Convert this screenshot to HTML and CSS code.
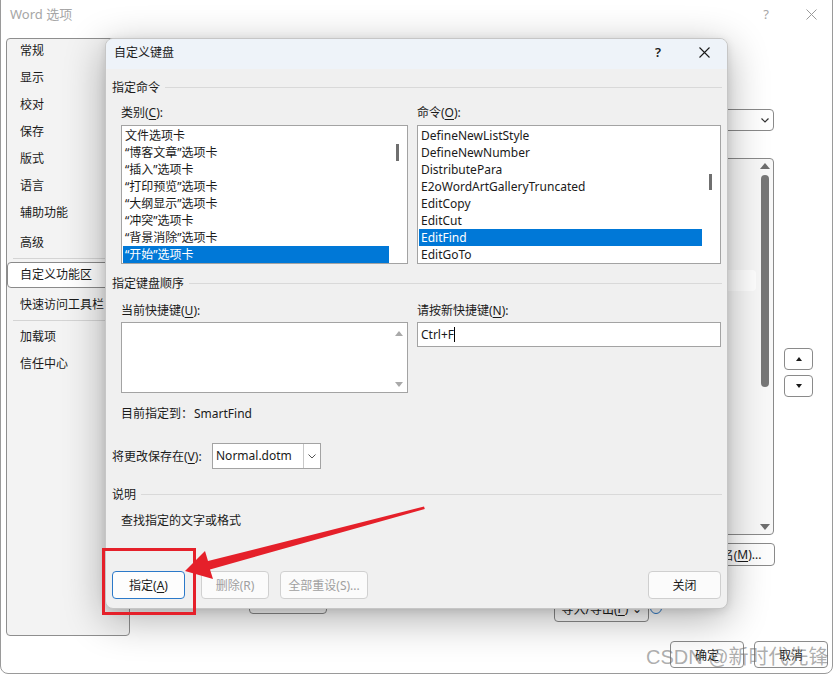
FILE: index.html
```html
<!DOCTYPE html>
<html lang="zh-CN">
<head>
<meta charset="utf-8">
<title>Word 选项</title>
<link rel="stylesheet" href="styles.css">
</head>
<body>
<div class="window">
  <div class="win-title">
    <span class="win-name">Word 选项</span>
    <span class="win-help">?</span>
    <svg class="win-close" width="11" height="11" viewBox="0 0 11 11"><path d="M0.5 0.5L10.5 10.5M10.5 0.5L0.5 10.5" stroke="#9a9a9a" stroke-width="1" fill="none"/></svg>
  </div>
  <div class="win-main">
    <nav class="nav">
      <div class="nav-item first">常规</div>
      <div class="nav-item">显示</div>
      <div class="nav-item">校对</div>
      <div class="nav-item">保存</div>
      <div class="nav-item">版式</div>
      <div class="nav-item">语言</div>
      <div class="nav-item">辅助功能</div>
      <div class="nav-item adv">高级</div>
      <div class="nav-sep"></div>
      <div class="nav-item selected">自定义功能区</div>
      <div class="nav-item after-sel">快速访问工具栏</div>
      <div class="nav-sep"></div>
      <div class="nav-item after-sep">加载项</div>
      <div class="nav-item">信任中心</div>
    </nav>
    <div class="pane">
      <div class="pane-combo">
        <svg class="chev" width="8" height="5" viewBox="0 0 8 5"><path d="M0.5 0.5L4 4L7.5 0.5" stroke="#333" stroke-width="1.2" fill="none"/></svg>
      </div>
      <div class="tree">
        <div class="tree-items"><div class="tree-row"></div></div>
        <div class="tree-scroll">
          <span class="tri-up dark"></span>
          <span class="tree-thumb"></span>
          <span class="tri-down dark"></span>
        </div>
      </div>
      <div class="updown">
        <button class="ud-btn"><span class="tri-up small"></span></button>
        <button class="ud-btn"><span class="tri-down small"></span></button>
      </div>
      <div class="rename-row"><button class="btn rename">重命名(<u>M</u>)...</button></div>
      <div class="custom-row">
        <button class="btn reset">重置(E)</button>
        <button class="btn impexp">导入/导出(<u>P</u>) ⌄</button>
        <span class="info"></span>
      </div>
    </div>
  </div>
  <div class="win-footer">
    <button class="btn foot">确定</button>
    <button class="btn foot">取消</button>
  </div>
</div>

<div class="dialog">
  <div class="dlg-title">
    <span class="dlg-name">自定义键盘</span>
    <span class="dlg-help">?</span>
    <svg class="dlg-close" width="11" height="11" viewBox="0 0 11 11"><path d="M0.5 0.5L10.5 10.5M10.5 0.5L0.5 10.5" stroke="#1a1a1a" stroke-width="1.1" fill="none"/></svg>
  </div>
  <div class="dlg-body">
    <div class="group first-group">指定命令</div>
    <div class="cols cols-top">
      <div class="lbl">类别(<u>C</u>):</div>
      <div class="lbl">命令(<u>O</u>):</div>
      <div class="listbox">
        <div class="items">
          <div class="item">文件选项卡</div>
          <div class="item">“博客文章”选项卡</div>
          <div class="item">“插入”选项卡</div>
          <div class="item">“打印预览”选项卡</div>
          <div class="item">“大纲显示”选项卡</div>
          <div class="item">“冲突”选项卡</div>
          <div class="item">“背景消除”选项卡</div>
          <div class="item sel">“开始”选项卡</div>
        </div>
        <div class="track"><span class="thumb thumb-left"></span></div>
      </div>
      <div class="listbox">
        <div class="items">
          <div class="item">DefineNewListStyle</div>
          <div class="item">DefineNewNumber</div>
          <div class="item">DistributePara</div>
          <div class="item">E2oWordArtGalleryTruncated</div>
          <div class="item">EditCopy</div>
          <div class="item">EditCut</div>
          <div class="item sel">EditFind</div>
          <div class="item">EditGoTo</div>
        </div>
        <div class="track"><span class="thumb thumb-right"></span></div>
      </div>
    </div>
    <div class="group second-group">指定键盘顺序</div>
    <div class="cols cols-keys">
      <div class="lbl">当前快捷键(<u>U</u>):</div>
      <div class="lbl">请按新快捷键(<u>N</u>):</div>
      <div class="keybox">
        <div class="keyitems"></div>
        <div class="keytrack"><span class="tri-up light"></span><span class="tri-down light"></span></div>
      </div>
      <div class="keyinput">Ctrl+F<span class="caret"></span></div>
    </div>
    <div class="current">目前指定到：<span class="cur-val">SmartFind</span></div>
    <div class="save-row">
      <span class="save-lbl">将更改保存在(<u>V</u>):</span>
      <div class="dropdown">
        <span class="dd-text">Normal.dotm</span>
        <span class="dd-btn"><svg width="8" height="5" viewBox="0 0 8 5"><path d="M0.5 0.5L4 4L7.5 0.5" stroke="#555" stroke-width="1" fill="none"/></svg></span>
      </div>
    </div>
    <div class="group third-group">说明</div>
    <div class="desc">查找指定的文字或格式</div>
    <div class="dlg-buttons">
      <button class="btn dlg-btn primary">指定(<u>A</u>)</button>
      <button class="btn dlg-btn disabled del">删除(R)</button>
      <button class="btn dlg-btn disabled resetall">全部重设(S)...</button>
      <button class="btn dlg-btn close">关闭</button>
    </div>
  </div>
</div>

<svg class="annot" width="834" height="676" viewBox="0 0 834 676">
  <rect x="103.5" y="549.5" width="91" height="64" fill="none" stroke="#e5202a" stroke-width="3"/>
  <polygon points="185,571 205,551 208,561 424,506.5 424.8,509 210,569.5 213,579" fill="#e5202a"/>
</svg>

<div class="watermark">CSDN @新时代先锋</div>
</body>
</html>
```

FILE: styles.css
```css
* { box-sizing: border-box; }
html, body { margin: 0; padding: 0; }
body {
  width: 834px;
  height: 676px;
  position: relative;
  overflow: hidden;
  background: #ffffff;
  font-family: "Noto Sans", "Noto Sans CJK SC", sans-serif;
  font-size: 12px;
  color: #1a1a1a;
}
u { text-decoration: underline; text-underline-offset: 2px; }

button {
  font-family: inherit;
  font-size: 12px;
  color: #1a1a1a;
  padding: 0;
  margin: 0;
}

/* ---------- background window ---------- */
.window {
  width: 833px;
  height: 682px;
  margin-top: -8px;
  padding-top: 7px;
  border: 1px solid #9a9a9a;
  border-radius: 8px;
  background: #ffffff;
  display: flex;
  flex-direction: column;
}
.win-title {
  height: 38px;
  flex: none;
  display: flex;
  align-items: flex-start;
  padding: 4px 0 0 9px;
  color: #a6a6a6;
  font-size: 13px;
  line-height: 20px;
}
.win-name { flex: 1; }
.win-help { width: 10px; text-align: center; margin-right: 35px; }
.win-close { margin: 5px 15px 0 0; }

.win-main {
  height: 598px;
  flex: none;
  display: flex;
  padding-left: 5px;
}
.nav {
  width: 124px;
  height: 598px;
  border: 1px solid #8e8e8e;
  border-radius: 4px;
  background: #f3f3f3;
  flex: none;
}
.nav-item {
  height: 27px;
  line-height: 27px;
  padding-left: 13px;
  white-space: nowrap;
}
.nav-item.first { margin-top: -2px; }
.nav-item.adv { margin-top: 3px; }
.nav-item.selected {
  margin-top: 3px;
  height: 26px;
  line-height: 24px;
  width: 118px;
  padding-left: 12px;
  background: #ffffff;
  border: 1px solid #8a8a8a;
  border-radius: 4px;
}
.nav-item.after-sel { margin-top: 3px; }
.nav-item.after-sep { margin-top: 2px; }
.nav-sep {
  height: 1px;
  background: #d4d4d4;
  margin: 2px 0 0 6px;
  width: 104px;
}

.pane {
  flex: 1;
  display: grid;
  grid-template-columns: 1fr 29px;
  column-gap: 10px;
  align-content: start;
  padding: 71px 19px 0 0;
}
.pane-combo {
  grid-column: 1;
  grid-row: 1;
  justify-self: end;
  width: 250px;
  height: 22px;
  border: 1px solid #8a8a8a;
  border-radius: 4px;
  background: #ffffff;
  display: flex;
  align-items: center;
  justify-content: flex-end;
  padding-right: 4px;
}
.tree {
  grid-column: 1;
  grid-row: 2;
  justify-self: end;
  margin-top: 27px;
  width: 340px;
  height: 377px;
  border: 1px solid #8a8a8a;
  border-radius: 4px;
  background: #f8f8f8;
  display: flex;
}
.tree-items { flex: 1; padding-top: 111px; }
.tree-row {
  height: 21px;
  margin-right: 4px;
  background: #ffffff;
  border-radius: 4px;
}
.tree-scroll {
  width: 10px;
  margin-right: 3px;
  display: flex;
  flex-direction: column;
  align-items: center;
  padding: 4px 0 4px;
}
.tree-thumb {
  display: block;
  width: 8px;
  height: 212px;
  margin-top: 6px;
  background: #777777;
  border-radius: 4px;
}
.tree-scroll .tri-down { margin-top: auto; }

.tri-up, .tri-down {
  display: block;
  width: 0;
  height: 0;
  border-left: 4px solid transparent;
  border-right: 4px solid transparent;
}
.tri-up { border-bottom: 5px solid #666; }
.tri-down { border-top: 5px solid #666; }
.tri-up.dark { border-bottom-color: #6e6e6e; border-left-width: 5px; border-right-width: 5px; border-bottom-width: 6px; }
.tri-down.dark { border-top-color: #6e6e6e; border-left-width: 5px; border-right-width: 5px; border-top-width: 6px; }
.tri-up.small { border-bottom: 4px solid #1a1a1a; border-left-width: 3.5px; border-right-width: 3.5px; }
.tri-down.small { border-top: 4px solid #1a1a1a; border-left-width: 3.5px; border-right-width: 3.5px; }
.tri-up.light { border-bottom-color: #a9a9a9; }
.tri-down.light { border-top-color: #a9a9a9; }

.updown {
  grid-column: 2;
  grid-row: 2;
  margin-top: 217px;
  display: flex;
  flex-direction: column;
  gap: 5px;
}
.ud-btn {
  width: 29px;
  height: 22px;
  border: 1px solid #8a8a8a;
  border-radius: 4px;
  background: #ffffff;
  display: flex;
  align-items: center;
  justify-content: center;
}

.btn {
  border: 1px solid #8a8a8a;
  border-radius: 4px;
  background: #fdfdfd;
  display: flex;
  align-items: center;
  justify-content: center;
  white-space: nowrap;
}
.rename-row {
  grid-column: 1;
  grid-row: 3;
  justify-self: end;
  margin: 8px -1px 0 0;
}
.rename { width: 91px; height: 23px; }
.custom-row {
  grid-column: 1;
  grid-row: 4;
  margin-top: 29px;
  display: flex;
  align-items: flex-start;
}
.reset { width: 78px; height: 26px; margin: -7px 0 0 119px; }
.impexp { width: 95px; height: 27px; margin-left: 227px; }
.info {
  width: 12px;
  height: 12px;
  border: 1.5px solid #2a78c8;
  border-radius: 50%;
  margin: 7px 0 0 1px;
}

.win-footer {
  margin-top: 5px;
  display: flex;
  justify-content: flex-end;
  gap: 10px;
  padding-right: 4px;
}
.foot { width: 74px; height: 27px; }

/* ---------- dialog ---------- */
.dialog {
  position: absolute;
  left: 105px;
  top: 38px;
  width: 623px;
  height: 571px;
  border: 1px solid #c6c6c6;
  border-radius: 8px;
  background: #f0f0f0;
  overflow: hidden;
  display: flex;
  flex-direction: column;
  box-shadow: 0 10px 40px rgba(0, 0, 0, 0.32), 0 2px 8px rgba(0, 0, 0, 0.10);
}
.dlg-title {
  height: 30px;
  flex: none;
  background: #eef3f9;
  display: flex;
  align-items: flex-start;
  padding: 5px 0 0 8px;
  line-height: 17px;
}
.dlg-name { flex: 1; }
.dlg-help { width: 10px; text-align: center; margin-right: 36px; font-size: 13px; font-weight: 600; }
.dlg-close { margin: 3px 17px 0 0; }

.dlg-body {
  flex: 1;
  display: flex;
  flex-direction: column;
  padding: 0 5px 9px 6px;
}
.group {
  display: flex;
  align-items: center;
  line-height: 17px;
  height: 17px;
  white-space: nowrap;
}
.group::after {
  content: "";
  flex: 1;
  height: 1px;
  background: #d9d9d9;
  margin-left: 5px;
}
.first-group { margin-top: 10px; }
.second-group { margin-top: 11px; }
.third-group { margin-top: 17px; }

.cols {
  display: grid;
  grid-template-columns: 287px 304px;
  column-gap: 9px;
  margin-left: 9px;
}
.cols-top { margin-top: 8px; }
.cols-keys { margin-top: 10px; }
.lbl { line-height: 17px; height: 17px; white-space: nowrap; }

.listbox {
  margin-top: 4px;
  height: 139px;
  border: 1px solid #a3a3a3;
  background: #ffffff;
  padding: 1px;
  display: flex;
  overflow: hidden;
}
.items { flex: 1; }
.item {
  height: 17px;
  line-height: 17px;
  padding-left: 2px;
  white-space: nowrap;
}
.item.sel { background: #0078d7; color: #ffffff; }
.track { width: 17px; position: relative; }
.thumb {
  position: absolute;
  left: 7px;
  width: 3px;
  background: #6f6f6f;
}
.thumb-left { top: 17px; height: 17px; }
.thumb-right { top: 47px; height: 16px; }

.keybox {
  margin-top: 3px;
  height: 71px;
  border: 1px solid #a3a3a3;
  background: #ffffff;
  display: flex;
}
.keyitems { flex: 1; }
.keytrack {
  width: 17px;
  display: flex;
  flex-direction: column;
  align-items: center;
  justify-content: space-between;
  padding: 8px 0 5px;
}
.keyinput {
  margin-top: 3px;
  height: 25px;
  border: 1px solid #a3a3a3;
  background: #ffffff;
  display: flex;
  align-items: center;
  padding-left: 3px;
}
.caret {
  display: inline-block;
  width: 1px;
  height: 15px;
  background: #000;
  margin-left: 0;
}

.current {
  margin-top: 12px;
  padding-left: 9px;
  line-height: 17px;
  height: 17px;
}
.cur-val { margin-left: 1px; }

.save-row {
  margin-top: 21px;
  display: flex;
  align-items: center;
  height: 26px;
}
.save-lbl { width: 100px; white-space: nowrap; }
.dropdown {
  width: 109px;
  height: 26px;
  border: 1px solid #a3a3a3;
  background: #ffffff;
  display: flex;
  align-items: stretch;
}
.dd-text { flex: 1; padding-left: 3px; line-height: 24px; }
.dd-btn {
  width: 17px;
  border-left: 1px solid #c8c8c8;
  display: flex;
  align-items: center;
  justify-content: center;
}

.desc {
  margin-top: 9px;
  padding-left: 9px;
  line-height: 17px;
  height: 17px;
}

.dlg-buttons {
  margin-top: auto;
  display: flex;
  align-items: center;
}
.dlg-btn {
  height: 28px;
  border-color: #d0d0d0;
  background: #fbfbfb;
}
.dlg-btn.primary { width: 73px; border-color: #2b79c9; background: #fdfdfd; }
.dlg-btn.del { width: 68px; margin-left: 16px; }
.dlg-btn.resetall { width: 88px; margin-left: 11px; }
.dlg-btn.disabled { color: #a0a0a0; }
.dlg-btn.close { width: 73px; margin-left: auto; margin-right: 1px; border-color: #cfcfcf; }

/* ---------- overlays ---------- */
.annot {
  position: absolute;
  left: 0;
  top: 0;
  pointer-events: none;
}
.watermark {
  position: absolute;
  left: 646px;
  top: 643px;
  font-size: 20px;
  line-height: 28px;
  color: rgba(105, 105, 105, 0.55);
  white-space: nowrap;
  font-family: "Liberation Sans", "Noto Sans CJK SC", sans-serif;
}
```
